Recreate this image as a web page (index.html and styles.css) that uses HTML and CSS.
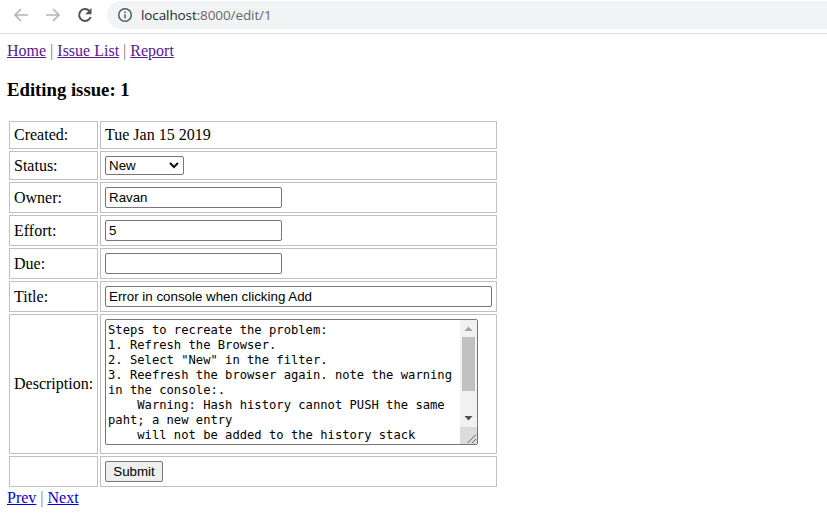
FILE: index.html
```html
<!DOCTYPE html>
<html lang="en">
<head>
<meta charset="utf-8">
<title>Edit issue</title>
<link rel="stylesheet" href="styles.css">
</head>
<body>
<header class="toolbar">
  <svg class="nav-icons" width="107" height="33" viewBox="0 0 107 33" fill="none" stroke-width="1.7">
    <path stroke="#b4b5b7" d="M28 15H15.500M21 9l-6 6 6 6"/>
    <path stroke="#b4b5b7" d="M46 15h12.500M53 9l6 6-6 6"/>
    <path stroke="#505357" stroke-width="2" d="M89.300 10.900A5.900 5.900 0 1 0 90.600 17"/>
    <path fill="#505357" d="M91.500 8v6.300h-6.300z"/>
  </svg>
  <div class="address">
    <svg width="16" height="16" viewBox="0 0 16 16" fill="none" stroke="#55585c" stroke-width="1.5">
      <circle cx="8" cy="8" r="6.300"/>
      <path d="M8 7.200v4.100M8 4.500v1.600"/>
    </svg>
    <span class="url"><span class="host">localhost</span>:8000/edit/1</span>
  </div>
</header>
<main class="page">
  <nav class="links visited"><a href="#">Home</a> <i>|</i> <a href="#">Issue List</a> <i>|</i> <a href="#">Report</a></nav>
  <h3>Editing issue: 1</h3>
  <form>
    <table>
      <tr class="r-created"><td class="label">Created:</td><td>Tue Jan 15 2019</td></tr>
      <tr class="r-status"><td>Status:</td><td>
        <div class="select"><span>New</span><svg width="10" height="7" viewBox="0 0 10 7" fill="none" stroke="#111" stroke-width="2"><path d="M1 1l4 4 4-4"/></svg></div>
      </td></tr>
      <tr><td>Owner:</td><td><input value="Ravan"></td></tr>
      <tr><td>Effort:</td><td><input value="5"></td></tr>
      <tr><td>Due:</td><td><input value=""></td></tr>
      <tr><td>Title:</td><td><input class="wide" value="Error in console when clicking Add"></td></tr>
      <tr class="r-desc"><td>Description:</td><td>
        <div class="memo">
          <div class="memo-text">Steps to recreate the problem:
1. Refresh the Browser.
2. Select "New" in the filter.
3. Reefresh the browser again. note the warning
in the console:.
    Warning: Hash history cannot PUSH the same
paht; a new entry
    will not be added to the history stack</div>
          <svg class="scroll" width="17" height="124" viewBox="0 0 17 124">
            <path fill="#f1f1f1" d="M0 0h17v107H0z"/>
            <path fill="#c1c1c1" d="M2 17h13v54H2z"/>
            <path fill="#a3a3a3" d="M4.500 11h8l-4-4.500z"/>
            <path fill="#505050" d="M4.500 96h8l-4 4.500z"/>
            <path fill="#dcdcdc" d="M0 107h17v17H0z"/>
            <path stroke="#666" stroke-width="1" d="M7.500 123l8.500-8.500M12 123l4-4"/>
          </svg>
        </div>
      </td></tr>
      <tr><td></td><td><button type="button">Submit</button></td></tr>
    </table>
  </form>
  <nav class="links"><a href="#">Prev</a> <i>|</i> <a href="#">Next</a></nav>
</main>
</body>
</html>
```
FILE: styles.css
```css
* { box-sizing: border-box; }
body {
  margin: 0;
  background: #fff;
  color: #000;
  font: 16px/18px "Liberation Serif", serif;
  overflow: hidden;
}
.toolbar {
  display: flex;
  height: 34px;
  border-bottom: 1px solid #d9d9db;
}
.nav-icons { flex: none; }
.address {
  flex: 1;
  display: flex;
  align-items: center;
  gap: 8px;
  height: 28px;
  margin-top: 1px;
  padding-left: 10px;
  border-radius: 14px 0 0 14px;
  background: #f1f3f4;
}
.url {
  font: 13.5px/18px "Open Sans", sans-serif;
  letter-spacing: -0.1px;
  color: #66696d;
}
.host { color: #27292c; }
.page { padding: 8px 7px 0; }
.links { height: 18px; }
.links a { color: #0000d0; }
.visited a { color: #551a8b; }
.links i { font-style: normal; color: #777; }
h3 {
  margin: 20px 0 19px;
  font-size: 18.72px;
  line-height: 20px;
}
table {
  width: 492px;
  table-layout: fixed;
  border-spacing: 2px;
}
tr { height: 31px; }
.r-created { height: 28px; }
.r-status { height: 29px; }
.r-desc { height: 140px; }
td {
  padding: 0 4px;
  border: 1px solid #c0c0c0;
  white-space: nowrap;
  vertical-align: middle;
}
.label { width: 89px; }
input, button, .select {
  display: block;
  height: 21px;
  border: 1px solid #767676;
  border-radius: 2px;
  background: #fff;
  color: #000;
  font: 13.333px/17px "Liberation Sans", sans-serif;
}
input { width: 177px; padding: 0 3px; }
.wide { width: 387px; }
.select {
  display: flex;
  align-items: center;
  justify-content: space-between;
  width: 79px;
  height: 19px;
  padding: 0 4px 0 3px;
}
button {
  width: 58px;
  padding: 0;
  background: #efefef;
}
.memo {
  display: flex;
  width: 373px;
  height: 126px;
  margin-bottom: 4px;
  border: 1px solid #767676;
  border-radius: 2px;
}
.memo-text {
  flex: 1;
  padding: 3px 2px 0;
  overflow: hidden;
  white-space: pre;
  font: 12.17px/15px "DejaVu Sans Mono", monospace;
}
.scroll { flex: none; }
```
